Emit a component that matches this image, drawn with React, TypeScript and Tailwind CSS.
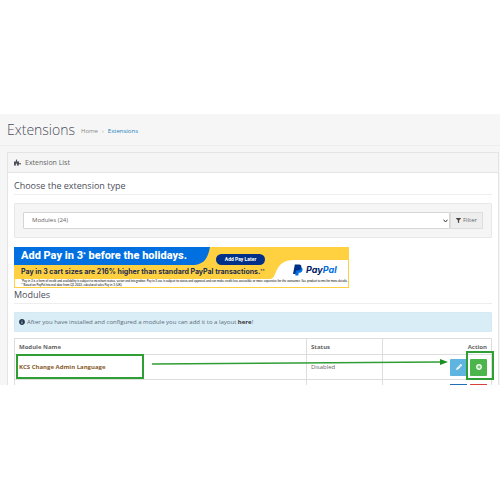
import { FaFilter, FaInfoCircle, FaPencilAlt, FaPlusCircle, FaPuzzlePiece } from "react-icons/fa";

function PageHeader() {
  return (
    <header className="h-8 flex items-center border-b border-[#eeeeee] px-[7px]">
      <h1 className="text-[14px] leading-5 font-light text-[#4c4d5a]">Extensions</h1>
      <nav className="ml-[6px] pt-[3px] text-[6px] leading-3" aria-label="Breadcrumb">
        <a href="#" className="text-[#888888]">
          Home
        </a>
        <span className="mx-1 text-[#aaaaaa]">›</span>
        <a href="#" className="text-[#1e7fbf]">
          Extensions
        </a>
      </nav>
    </header>
  );
}

function PayPalBanner() {
  return (
    <a
      href="#"
      className="relative block w-[335px] h-[41px] overflow-hidden font-[Inter,sans-serif] text-[#001c64]"
    >
      <svg className="absolute inset-0" width="335" height="41" viewBox="0 0 335 41" aria-hidden="true">
        <rect width="335" height="41" fill="#ffd140" />
        <path d="M1 32H256C264 32 259 13 280 13H334V40H1Z" fill="#ffffff" />
        <path d="M0 0H196C194 10 191 18 178 18H0Z" fill="#0070e0" />
      </svg>
      <div className="relative flex items-center h-[18px] pl-[7px]">
        <span className="w-[195px] font-[Roboto,sans-serif] text-[11px] leading-4 font-extrabold text-white whitespace-nowrap">
          Add Pay in 3<sup className="text-[6px]">*</sup> before the holidays.
        </span>
        <span className="mt-[7px] w-[49px] h-[11px] rounded-full bg-[#003087] text-center font-[Roboto,sans-serif] text-[5px] leading-[11px] font-bold text-white">
          Add Pay Later
        </span>
      </div>
      <div className="relative flex h-[14px] items-center pl-[7px]">
        <span className="w-[272px] text-[7px] leading-3 font-bold text-[#1c2c50] whitespace-nowrap">
          Pay in 3 cart sizes are 216% higher than standard PayPal transactions.
          <sup className="text-[4px]">**</sup>
        </span>
        <span className="-mt-[5px] flex items-center gap-[3px] text-[9px] leading-3 font-bold italic">
          <svg width="10" height="12" viewBox="0 0 11 12" aria-hidden="true">
            <path d="M3 3H8C10.5 3 11 5 10.3 6.7C9.6 8.5 8 9 6.3 9L5.8 12H2.5Z" fill="#0070e0" />
            <path d="M2 0H6.5C9 0 9.7 1.8 9 3.8C8.3 5.8 6.6 6.5 4.4 6.5H3.5L2.8 10.5H0Z" fill="#003087" />
          </svg>
          <span>
            Pay<span className="text-[#0070e0]">Pal</span>
          </span>
        </span>
      </div>
      <p className="relative pl-[7px] font-[Lato,sans-serif] text-[3px] leading-[4px] text-black whitespace-nowrap">
        *Pay in 3 is a form of credit and availability is subject to merchant status, sector and integration. Pay in 3
        use is subject to status and approval and can make credit less accessible or more expensive for the consumer.
        See product terms for more details.
        <br />
        **Based on PayPal internal data from Q1 2022, calculated sales Pay in 3 (UK).
      </p>
    </a>
  );
}

function ModuleTable() {
  return (
    <div className="relative mt-[6px]">
      <table className="w-full table-fixed border-collapse text-[6px] leading-3 text-[#666666]">
        <thead>
          <tr className="h-4">
            <th className="border border-[#dddddd] px-1 text-left font-bold">Module Name</th>
            <th className="w-[76px] border border-[#dddddd] px-1 text-left font-bold">Status</th>
            <th className="w-[109px] border border-[#dddddd] px-1 text-right font-bold">Action</th>
          </tr>
        </thead>
        <tbody>
          <tr className="h-[25px]">
            <td className="border border-[#dddddd] px-1 font-bold text-[#8a5a2b]">KCS Change Admin Language</td>
            <td className="border border-[#dddddd] px-1">Disabled</td>
            <td className="border border-[#dddddd] px-1">
              <div className="flex justify-end gap-[3px]">
                <button
                  aria-label="Edit"
                  className="flex h-[17px] w-[17px] items-center justify-center rounded-[1px] bg-[#5fb5e0] text-white"
                >
                  <FaPencilAlt size={6} />
                </button>
                <button
                  aria-label="Install"
                  className="flex h-[17px] w-[17px] items-center justify-center rounded-[1px] bg-[#4cb64c] text-white"
                >
                  <FaPlusCircle size={6} />
                </button>
              </div>
            </td>
          </tr>
          <tr className="h-[25px]">
            <td className="border border-[#dddddd]" />
            <td className="border border-[#dddddd]" />
            <td className="border border-[#dddddd] px-1">
              <div className="flex justify-end gap-[3px]">
                <button aria-label="Edit" className="h-[17px] w-[17px] bg-[#1e6fb5]" />
                <button aria-label="Uninstall" className="h-[17px] w-[17px] bg-[#d9403c]" />
              </div>
            </td>
          </tr>
        </tbody>
      </table>

      {/* Tutorial marks drawn over the first row */}
      <div className="pointer-events-none absolute left-[2px] top-4 h-[25px] w-[128px] border-2 border-[#2f9e35]" />
      <div className="pointer-events-none absolute left-[138px] right-[44px] top-[20px] flex items-center">
        <svg className="h-2 min-w-0 flex-1" viewBox="0 0 288 8" preserveAspectRatio="none" aria-hidden="true">
          <path d="M0 6L288 4" stroke="#2f9e35" strokeWidth="1.6" />
        </svg>
        <svg width="8" height="6" viewBox="0 0 8 6" aria-hidden="true">
          <path d="M0 0L8 3L0 6Z" fill="#1b8f22" />
        </svg>
      </div>
      <div className="pointer-events-none absolute -right-[2px] top-[13px] h-[29px] w-[28px] border-2 border-[#2f9e35]" />
    </div>
  );
}

export default function App() {
  return (
    <div className="min-h-screen bg-white py-[114px] font-['Open_Sans',sans-serif]">
      <main className="h-[271px] overflow-hidden bg-[#f6f6f6]">
        <PageHeader />
        <section className="ml-[7px] mr-px mt-[6px] border border-[#e4e4e4] bg-white">
          <div className="flex h-5 items-center gap-1 border-b border-[#e4e4e4] bg-[#f5f5f5] px-[6px] text-[7px] leading-3 text-[#666666]">
            <FaPuzzlePiece size={7} className="text-[#4c4d5a]" />
            <h2>Extension List</h2>
          </div>
          <div className="px-[6px]">
            <h3 className="mt-[6px] border-b border-[#eeeeee] pb-px text-[9px] leading-[14px] text-[#4c4d5a]">
              Choose the extension type
            </h3>
            <form className="mt-2 flex h-[35px] items-center rounded-[1px] border border-[#e8e8e8] bg-[#f5f5f5] px-2 text-[6px] text-[#666666]">
              <div className="relative flex-1">
                <select
                  aria-label="Extension type"
                  className="block h-[17px] w-full appearance-none rounded-[1px] border border-[#d5d5d5] bg-white pl-2"
                >
                  <option>Modules (24)</option>
                </select>
                <svg
                  className="pointer-events-none absolute right-[2px] top-[7px]"
                  width="5"
                  height="4"
                  viewBox="0 0 5 4"
                  aria-hidden="true"
                >
                  <path d="M0.5 0.7L2.5 3L4.5 0.7" fill="none" stroke="#333333" />
                </svg>
              </div>
              <button
                type="button"
                className="flex h-[17px] w-[33px] items-center justify-center gap-[2px] border border-[#dddddd] bg-[#eeeeee]"
              >
                <FaFilter size={5} className="text-[#444444]" /> Filter
              </button>
            </form>
            <div className="mt-[9px]">
              <PayPalBanner />
            </div>
            <h3 className="border-b border-[#eeeeee] pb-px text-[9px] leading-[14px] text-[#4c4d5a]">Modules</h3>
            <div className="mt-2 flex h-5 items-center gap-[2px] rounded-[1px] border border-[#d3e9f3] bg-[#d9edf7] px-1 text-[6px] leading-3 text-[#5a6b78]">
              <FaInfoCircle size={6} className="text-[#22384a]" />
              <p>
                After you have installed and configured a module you can add it to a layout{" "}
                <a href="#" className="font-bold text-[#333333]">
                  here
                </a>
                !
              </p>
            </div>
            <ModuleTable />
          </div>
        </section>
      </main>
    </div>
  );
}
